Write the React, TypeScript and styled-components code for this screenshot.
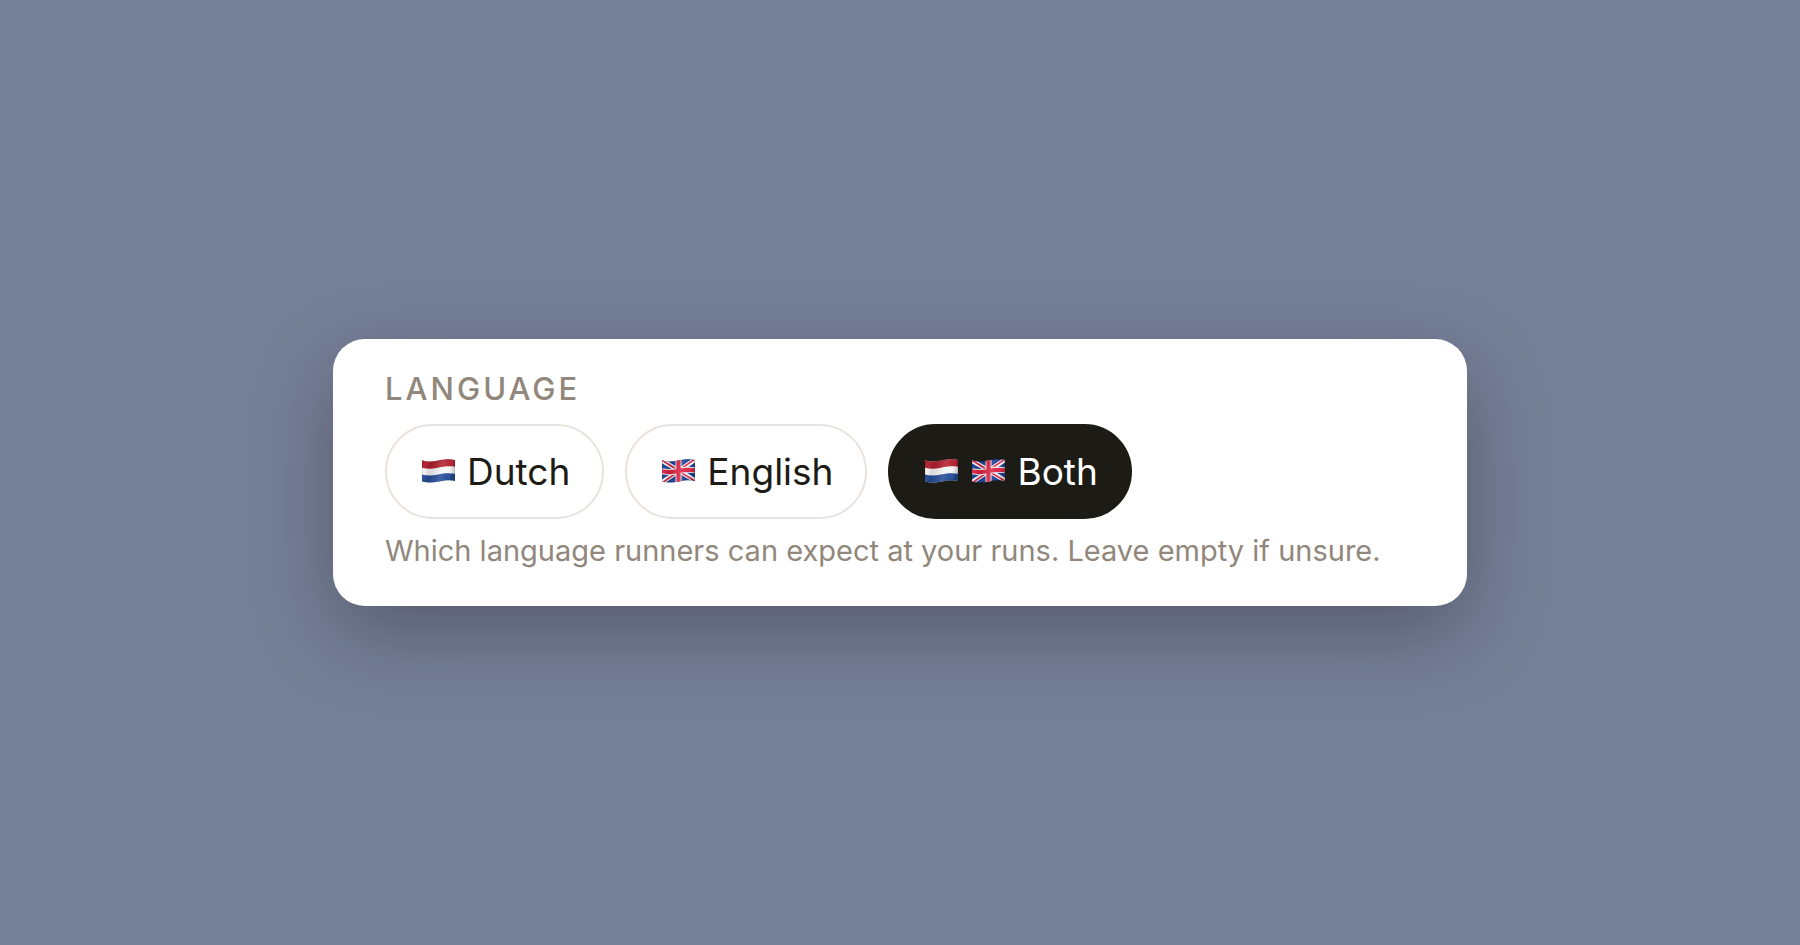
import React, { useState } from 'react';
import styled, { createGlobalStyle } from 'styled-components';

const GlobalStyle = createGlobalStyle`
  * { box-sizing: border-box; }
  body {
    margin: 0;
    background: #768098;
    font-family: Inter, "Liberation Sans", sans-serif;
  }
`;

const Page = styled.main`
  min-height: 100vh;
  display: flex;
  align-items: center;
  justify-content: center;
`;

const Card = styled.section`
  width: 63%;
  min-width: 1104px;
  padding: 32px 52px 36px;
  border-radius: 32px;
  background: #fff;
  box-shadow: 0 28px 84px rgba(24, 14, 16, 0.32);
`;

const Label = styled.h2`
  margin: 0 0 17px;
  font-size: 31px;
  line-height: 36px;
  font-weight: 500;
  letter-spacing: 3px;
  text-transform: uppercase;
  color: #91877c;
`;

const Options = styled.div`
  display: flex;
  flex-wrap: wrap;
  gap: 21px;
`;

const Pill = styled.button<{ $selected: boolean }>`
  display: flex;
  align-items: center;
  gap: 12px;
  height: 95px;
  padding: 0 32px 0 35px;
  border: 2px solid ${(p) => (p.$selected ? '#1c1b16' : '#e8e3de')};
  border-radius: 48px;
  background: ${(p) => (p.$selected ? '#1c1b16' : '#fff')};
  color: ${(p) => (p.$selected ? '#fff' : '#1c1b16')};
  font-family: inherit;
  font-size: 37px;
  line-height: 44px;
  cursor: pointer;
`;

const Flags = styled.span`
  display: flex;
  gap: 14px;
  padding-bottom: 2px;
`;

const Flag = styled.svg`
  display: block;
  flex: none;
  width: 33px;
  height: 24px;
`;

const Hint = styled.p`
  margin: 13px 0 0;
  font-size: 29px;
  line-height: 38px;
  color: #91877c;
`;

const wave = 'M0 1.2C4 2.6 9 2.9 15 1.7S27 -.3 33 .9V21.9C28 20.8 23 21.4 17 22.6S5 23.9 0 22.6Z';

function Shading({ id }: { id: string }) {
  return (
    <linearGradient id={id} x1="0" x2="1" y1="0" y2="0.15">
      <stop offset="0" stopColor="#000" stopOpacity="0.12" />
      <stop offset="0.1" stopColor="#fff" stopOpacity="0.04" />
      <stop offset="0.28" stopColor="#000" stopOpacity="0.12" />
      <stop offset="0.65" stopColor="#fff" stopOpacity="0.14" />
      <stop offset="0.85" stopColor="#fff" stopOpacity="0.04" />
      <stop offset="1" stopColor="#000" stopOpacity="0.16" />
    </linearGradient>
  );
}

function DutchFlag({ id }: { id: string }) {
  return (
    <Flag viewBox="0 0 33 24" aria-hidden="true">
      <defs>
        <clipPath id={`${id}-clip`}><path d={wave} /></clipPath>
        <Shading id={`${id}-shade`} />
      </defs>
      <g clipPath={`url(#${id}-clip)`}>
        <rect width="33" height="24" fill="#f4f4f5" />
        <path d="M0 0H33V7.8C27 6.8 22 7.4 16 8.7S5 10 0 8.8Z" fill="#b01c2a" />
        <path d="M0 15.6C5 16.9 10 16.8 16 15.5S27 13.8 33 14.8V24H0Z" fill="#234a98" />
        <path d={wave} fill={`url(#${id}-shade)`} stroke="#20202a" strokeOpacity="0.25" strokeWidth="0.8" />
      </g>
    </Flag>
  );
}

function BritishFlag({ id }: { id: string }) {
  return (
    <Flag viewBox="0 0 33 24" aria-hidden="true">
      <defs>
        <clipPath id={`${id}-clip`}><path d={wave} /></clipPath>
        <Shading id={`${id}-shade`} />
      </defs>
      <g clipPath={`url(#${id}-clip)`} fill="none">
        <rect width="33" height="24" fill="#173c91" />
        <path d="M-1 1L34 22M-1 24L34 0" stroke="#f3f3f6" strokeWidth="4.6" />
        <path d="M-1 .6L16 11.2M17 12.4L34 22.6M-1 24.6L16 12.8M17 11.2L34 -.6" stroke="#d8203f" strokeWidth="1.6" />
        <path d="M16.5 0V24M0 12.2C5 13.5 10 13.4 16.5 12S27 10.3 33 11.3" stroke="#f3f3f6" strokeWidth="6" />
        <path d="M16.5 0V24M0 12.2C5 13.5 10 13.4 16.5 12S27 10.3 33 11.3" stroke="#dc2140" strokeWidth="4.2" />
        <path d={wave} fill={`url(#${id}-shade)`} stroke="#20202a" strokeOpacity="0.25" strokeWidth="0.8" />
      </g>
    </Flag>
  );
}

type Country = 'nl' | 'gb';

const languages: { name: string; flags: Country[] }[] = [
  { name: 'Dutch', flags: ['nl'] },
  { name: 'English', flags: ['gb'] },
  { name: 'Both', flags: ['nl', 'gb'] },
];

export default function App() {
  const [selected, setSelected] = useState<string | null>('Both');

  return (
    <>
      <GlobalStyle />
      <Page>
        <Card>
          <Label id="language-label">Language</Label>
          <Options role="group" aria-labelledby="language-label" aria-describedby="language-hint">
            {languages.map(({ name, flags }) => (
              <Pill
                key={name}
                type="button"
                $selected={selected === name}
                aria-pressed={selected === name}
                onClick={() => setSelected(selected === name ? null : name)}
              >
                <Flags>
                  {flags.map((flag) =>
                    flag === 'nl' ? (
                      <DutchFlag key={flag} id={`${name}-nl`} />
                    ) : (
                      <BritishFlag key={flag} id={`${name}-gb`} />
                    ),
                  )}
                </Flags>
                <span>{name}</span>
              </Pill>
            ))}
          </Options>
          <Hint id="language-hint">
            Which language runners can expect at your runs. Leave empty if unsure.
          </Hint>
        </Card>
      </Page>
    </>
  );
}
